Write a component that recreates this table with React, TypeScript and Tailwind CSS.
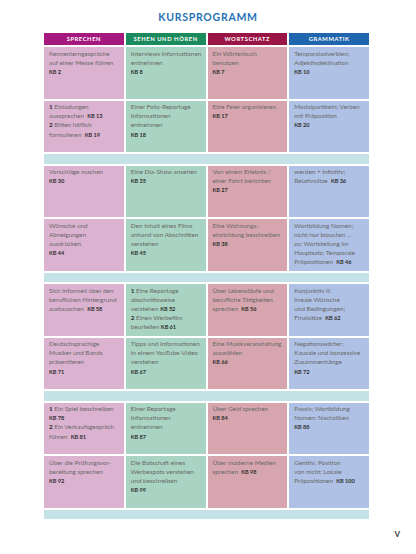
import type { ReactNode } from "react";

const KB = ({ n }: { n: number }) => (
  <span className="font-bold text-[#2f2f2f] text-[5.6px] tracking-[-0.01em]">KB {n}</span>
);

const Num = ({ n }: { n: number }) => <span className="font-bold text-[#2f2f2f]">{n} </span>;

const headers = [
  { label: "SPRECHEN", bg: "bg-[#a5197f]" },
  { label: "SEHEN UND HÖREN", bg: "bg-[#1b8a5c]" },
  { label: "WORTSCHATZ", bg: "bg-[#991546]" },
  { label: "GRAMMATIK", bg: "bg-[#1f66ae]" },
];

const cellBg = ["bg-[#dcb2d1]", "bg-[#a9d4c3]", "bg-[#d6a5ae]", "bg-[#afc1e5]"];

type Row = ReactNode[][];

const blocks: Row[][] = [
  [
    [
      ["Kennenlerngespräche", "auf einer Messe führen", <KB n={2} />],
      ["Interviews Informationen", "entnehmen", <KB n={8} />],
      ["Ein Wörterbuch", "benutzen", <KB n={7} />],
      ["Temporaladverbien;", "Adjektivdeklination", <KB n={10} />],
    ],
    [
      [
        <><Num n={1} />Einladungen</>,
        <>aussprechen&nbsp; <KB n={13} /></>,
        <><Num n={2} />Bitten höflich</>,
        <>formulieren&nbsp; <KB n={19} /></>,
      ],
      ["Einer Foto-Reportage", "Informationen", "entnehmen", <KB n={18} />],
      ["Eine Feier organisieren", <KB n={17} />],
      ["Modalpartikeln; Verben", "mit Präposition", <KB n={20} />],
    ],
  ],
  [
    [
      ["Vorschläge machen", <KB n={30} />],
      ["Eine Dia-Show ansehen", <KB n={35} />],
      ["Von einem Erlebnis /", "einer Fahrt berichten", <KB n={27} />],
      ["werden + Infinitiv;", <>Relativsätze&nbsp; <KB n={36} /></>],
    ],
    [
      ["Wünsche und", "Abneigungen", "ausdrücken", <KB n={44} />],
      ["Den Inhalt eines Films", "anhand von Abschnitten", "verstehen", <KB n={45} />],
      ["Eine Wohnungs-", "einrichtung beschreiben", <KB n={38} />],
      [
        "Wortbildung Nomen;",
        <span className="italic">nicht/nur brauchen …</span>,
        <><span className="italic">zu</span>; Wortstellung im</>,
        "Hauptsatz; Temporale",
        <>Präpositionen&nbsp; <KB n={46} /></>,
      ],
    ],
  ],
  [
    [
      ["Sich informell über den", "beruflichen Hintergrund", <>austauschen&nbsp; <KB n={58} /></>],
      [
        <><Num n={1} />Eine Reportage</>,
        "abschnittsweise",
        <>verstehen <KB n={52} /></>,
        <><Num n={2} />Einen Werbefilm</>,
        <>beurteilen <KB n={61} /></>,
      ],
      ["Über Lebensläufe und", "berufliche Tätigkeiten", <>sprechen&nbsp; <KB n={56} /></>],
      ["Konjunktiv II:", "Irreale Wünsche", "und Bedingungen;", <>Finalsätze&nbsp; <KB n={62} /></>],
    ],
    [
      ["Deutschsprachige", "Musiker und Bands", "präsentieren", <KB n={71} />],
      ["Tipps und Informationen", "in einem YouTube-Video", "verstehen", <KB n={67} />],
      ["Eine Musikveranstaltung", "auswählen", <KB n={66} />],
      ["Negationswörter;", "Kausale und konzessive", "Zusammenhänge", <KB n={72} />],
    ],
  ],
  [
    [
      [
        <><Num n={1} />Ein Spiel beschreiben</>,
        <KB n={78} />,
        <><Num n={2} />Ein Verkaufsgespräch</>,
        <>führen&nbsp; <KB n={81} /></>,
      ],
      ["Einer Reportage", "Informationen", "entnehmen", <KB n={87} />],
      ["Über Geld sprechen", <KB n={84} />],
      ["Passiv; Wortbildung", "Nomen: Nachsilben", <KB n={88} />],
    ],
    [
      ["Über die Prüfungsvor-", "bereitung sprechen", <KB n={92} />],
      ["Die Botschaft eines", "Werbespots verstehen", "und beschreiben", <KB n={99} />],
      ["Über moderne Medien", <>sprechen&nbsp; <KB n={98} /></>],
      ["Genitiv; Position", "von nicht; Lokale", <>Präpositionen&nbsp; <KB n={100} /></>],
    ],
  ],
];

function Cell({ lines, bg }: { lines: ReactNode[]; bg: string }) {
  return (
    <div className={`${bg} h-[51.5px] pl-[5px] pt-[1.5px] text-[6.4px] leading-[9.2px] text-[#6a6a6a]`}>
      {lines.map((l, i) => (
        <div key={i} className="whitespace-nowrap">
          {l}
        </div>
      ))}
    </div>
  );
}

export default function App() {
  return (
    <div
      className="w-[416px] h-[554px] bg-white"
      style={{ fontFamily: "Lato, 'Open Sans', sans-serif" }}
    >
      <h1 className="pt-[10px] h-[33px] text-center text-[10.5px] font-bold tracking-[0.07em] text-[#2572b5]">
        KURSPROGRAMM
      </h1>

      <div className="ml-[44px] w-[325px] grid grid-cols-4 gap-[2px]">
        {headers.map((h) => (
          <div
            key={h.label}
            className={`${h.bg} h-[12px] flex items-center justify-center text-white text-[5.8px] font-bold tracking-[0.1em]`}
          >
            {h.label}
          </div>
        ))}

        {blocks.map((block, bi) => (
          <div key={bi} className="contents">
            {block.map((row, ri) =>
              row.map((lines, ci) => <Cell key={`${ri}-${ci}`} lines={lines} bg={cellBg[ci]} />)
            )}
            <div className="col-span-4 h-[9.5px] bg-[#c5e2e6]" />
          </div>
        ))}
      </div>

      <div className="pr-[16px] pt-[9px] text-right text-[8px] font-bold text-[#3a3a3a]">V</div>
    </div>
  );
}
